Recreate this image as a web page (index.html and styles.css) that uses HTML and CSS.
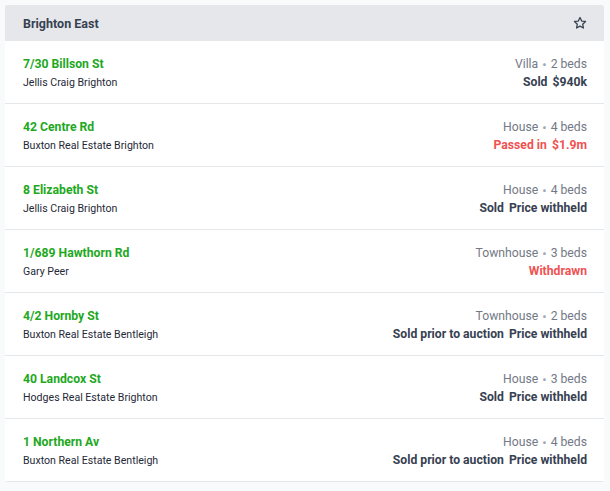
FILE: index.html
```html
<!DOCTYPE html>
<html>
<head>
<meta charset="utf-8">
<link rel="stylesheet" href="styles.css">
</head>
<body>
<div class="card">
  <div class="header">
    <span class="title">Brighton East</span>
    <svg class="star" width="14" height="14" viewBox="0 0 24 24" fill="none" stroke="#374151" stroke-width="2.2" stroke-linejoin="round"><path d="M12 2.5l2.9 6.1 6.6.8-4.9 4.6 1.3 6.6L12 17.3l-5.9 3.3 1.3-6.6-4.9-4.6 6.6-.8z"/></svg>
  </div>
  <div class="row">
    <div class="left"><div class="addr">7/30 Billson St</div><div class="agent">Jellis Craig Brighton</div></div>
    <div class="right"><div class="meta">Villa <b>•</b> 2 beds</div><div class="status">Sold <span>$940k</span></div></div>
  </div>
  <div class="row">
    <div class="left"><div class="addr">42 Centre Rd</div><div class="agent">Buxton Real Estate Brighton</div></div>
    <div class="right"><div class="meta">House <b>•</b> 4 beds</div><div class="status red">Passed in <span>$1.9m</span></div></div>
  </div>
  <div class="row">
    <div class="left"><div class="addr">8 Elizabeth St</div><div class="agent">Jellis Craig Brighton</div></div>
    <div class="right"><div class="meta">House <b>•</b> 4 beds</div><div class="status">Sold <span>Price withheld</span></div></div>
  </div>
  <div class="row">
    <div class="left"><div class="addr">1/689 Hawthorn Rd</div><div class="agent">Gary Peer</div></div>
    <div class="right"><div class="meta">Townhouse <b>•</b> 3 beds</div><div class="status red">Withdrawn</div></div>
  </div>
  <div class="row">
    <div class="left"><div class="addr">4/2 Hornby St</div><div class="agent">Buxton Real Estate Bentleigh</div></div>
    <div class="right"><div class="meta">Townhouse <b>•</b> 2 beds</div><div class="status">Sold prior to auction <span>Price withheld</span></div></div>
  </div>
  <div class="row">
    <div class="left"><div class="addr">40 Landcox St</div><div class="agent">Hodges Real Estate Brighton</div></div>
    <div class="right"><div class="meta">House <b>•</b> 3 beds</div><div class="status">Sold <span>Price withheld</span></div></div>
  </div>
  <div class="row">
    <div class="left"><div class="addr">1 Northern Av</div><div class="agent">Buxton Real Estate Bentleigh</div></div>
    <div class="right"><div class="meta">House <b>•</b> 4 beds</div><div class="status">Sold prior to auction <span>Price withheld</span></div></div>
  </div>
</div>
</body>
</html>
```
FILE: styles.css
```css
html, body { margin: 0; padding: 0; }
body {
  background: #f9fafb;
  font-family: Roboto, "Noto Sans", sans-serif;
  padding: 5px 6px 0 5px;
}
.card {
  background: #fff;
  border-radius: 2px;
  overflow: hidden;
}
.header {
  background: #e5e7eb;
  height: 36px;
  display: flex;
  align-items: center;
  justify-content: space-between;
  padding: 0 18px;
}
.title {
  font-size: 12.5px;
  font-weight: 700;
  color: #374151;
}
.star { display: block; margin-right: -1px; }
.row {
  border-bottom: 1px solid #e5e7eb;
  display: flex;
  justify-content: space-between;
  align-items: center;
  padding: 2px 17px 0 18px;
  box-sizing: border-box;
  height: 63px;
}
.left, .right { display: flex; flex-direction: column; gap: 3px; }
.right { align-items: flex-end; }
.addr {
  font-size: 12.2px;
  font-weight: 700;
  color: #1ea81e;
  line-height: 15px;
}
.agent {
  font-size: 10.6px;
  color: #1f2937;
  line-height: 15px;
}
.meta {
  font-size: 12.2px;
  color: #737985;
  line-height: 15px;
}
.meta b { font-weight: 400; color: #a1a7b0; font-size: 13px; line-height: 10px; vertical-align: -1px; margin: 0 1px; }
.status {
  font-size: 12.2px;
  font-weight: 700;
  color: #374151;
  line-height: 15px;
}
.status span { margin-left: 2px; }
.status.red { color: #f05252; }
```
